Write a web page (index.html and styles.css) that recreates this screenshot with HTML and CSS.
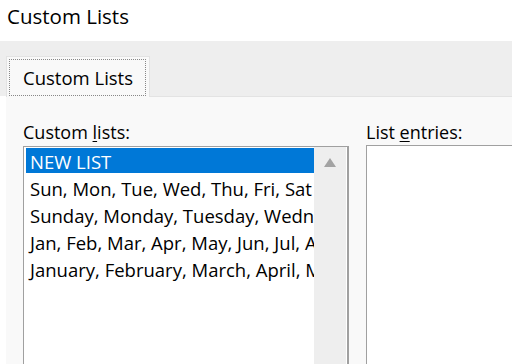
FILE: index.html
```html
<!DOCTYPE html>
<html lang="en">
<head>
    <meta charset="UTF-8">
    <title>Custom Lists</title>
    <link rel="stylesheet" href="styles.css">
</head>
<body>
    <div class="title-bar">Custom Lists</div>

    <div class="tab-strip">
        <div class="tab"><span class="tab-focus">Custom Lists</span></div>
    </div>

    <div class="tab-panel">
        <div class="column lists-column">
            <label class="field-label">Custom <u>l</u>ists:</label>
            <div class="listbox">
                <ul class="list-items">
                    <li class="selected">NEW LIST</li>
                    <li>Sun, Mon, Tue, Wed, Thu, Fri, Sat</li>
                    <li>Sunday, Monday, Tuesday, Wednesday, Thursday, Friday, Saturday</li>
                    <li>Jan, Feb, Mar, Apr, May, Jun, Jul, Aug, Sep, Oct, Nov, Dec</li>
                    <li>January, February, March, April, May, June, July, August</li>
                </ul>
                <div class="scrollbar">
                    <span class="arrow-up"></span>
                </div>
            </div>
        </div>

        <div class="column entries-column">
            <label class="field-label">List <u>e</u>ntries:</label>
            <div class="entries-box"></div>
        </div>
    </div>
</body>
</html>
```

FILE: styles.css
```css
body {
    margin: 0;
    padding: 0;
    font-family: "Open Sans", "Noto Sans", sans-serif;
    color: #000;
    background-color: #fff;
    overflow: hidden;
    height: 364px;
}

.title-bar {
    height: 41px;
    padding-left: 7px;
    font-size: 20.5px;
    line-height: 32px;
    background-color: #fff;
}

.tab-strip {
    height: 55px;
    background-color: #eeeeee;
    display: flex;
    align-items: flex-end;
    padding-left: 6px;
}

.tab {
    width: 144px;
    height: 41px;
    box-sizing: border-box;
    background-color: #f9f9f9;
    border: 1px solid #e3e3e3;
    border-bottom: none;
    padding: 2px 3px 1px 2px;
    margin-bottom: -1px;
    position: relative;
}

.tab-focus {
    display: block;
    height: 100%;
    box-sizing: border-box;
    border: 1px dotted #888;
    font-size: 18.5px;
    line-height: 36px;
    padding-left: 13px;
}

.tab-panel {
    margin-left: 6px;
    height: 244px;
    background-color: #f9f9f9;
    border-top: 1px solid #e3e3e3;
    display: flex;
    gap: 17px;
    padding-left: 17px;
    padding-top: 23px;
}

.column {
    display: flex;
    flex-direction: column;
}

.field-label {
    font-size: 18px;
    line-height: 24px;
    height: 26px;
    white-space: nowrap;
}

.field-label u {
    text-underline-offset: 2px;
}

.lists-column {
    width: 326px;
}

.entries-column {
    flex: 1;
}

.listbox {
    flex: 1;
    display: flex;
    border: 1px solid #a0a0a0;
    border-right-width: 2px;
    border-bottom: none;
    background-color: #fff;
    overflow: hidden;
}

.list-items {
    list-style: none;
    margin: 0;
    padding: 1px 0 0 2px;
    width: 289px;
    overflow: hidden;
}

.list-items li {
    height: 27px;
    line-height: 28px;
    font-size: 18.5px;
    padding-left: 4px;
    white-space: nowrap;
    overflow: hidden;
}

.list-items li.selected {
    background-color: #0078d7;
    color: #fff;
    height: 25px;
    line-height: 27px;
    margin-bottom: 2px;
}

.scrollbar {
    width: 32px;
    margin-right: 1px;
    background-color: #eeeeee;
    display: flex;
    justify-content: center;
    align-items: flex-start;
    padding-top: 11px;
}

.arrow-up {
    width: 0;
    height: 0;
    border-left: 6.5px solid transparent;
    border-right: 6.5px solid transparent;
    border-bottom: 9px solid #a3a3a3;
}

.entries-box {
    flex: 1;
    margin-top: -1px;
    border: 1px solid #a0a0a0;
    border-right: none;
    border-bottom: none;
    background-color: #fff;
}
```
